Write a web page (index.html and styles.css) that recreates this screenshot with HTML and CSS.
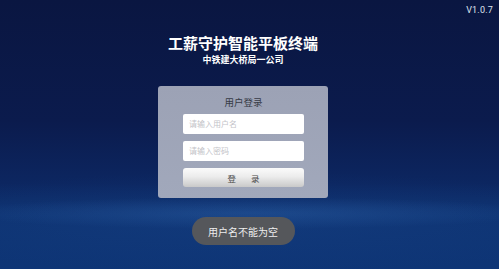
FILE: index.html
```html
<!DOCTYPE html>
<html lang="zh">
<head>
<meta charset="utf-8">
<link rel="stylesheet" href="styles.css">
</head>
<body>
<div class="screen">
  <div class="topbar"><span class="version">V1.0.7</span></div>
  <div class="main">
    <h1 class="title">工薪守护智能平板终端</h1>
    <div class="subtitle">中铁建大桥局一公司</div>
    <div class="card">
      <div class="card-title">用户登录</div>
      <div class="field"><span class="placeholder">请输入用户名</span></div>
      <div class="field"><span class="placeholder">请输入密码</span></div>
      <div class="btn">登<span class="gap"></span>录</div>
    </div>
    <div class="toast">用户名不能为空</div>
  </div>
</div>
</body>
</html>
```
FILE: styles.css
```css
html, body {
  margin: 0;
  padding: 0;
}
body {
  width: 499px;
  height: 269px;
  overflow: hidden;
  font-family: "Noto Sans CJK SC", "Noto Sans", sans-serif;
}
.screen {
  width: 499px;
  height: 269px;
  display: flex;
  flex-direction: column;
  background:
    radial-gradient(ellipse 300px 16px at 250px 213px, rgba(50,105,175,0.35), rgba(50,105,175,0) 100%),
    radial-gradient(ellipse 400px 50px at 250px 222px, rgba(25,70,140,0.3), rgba(25,70,140,0) 100%),
    linear-gradient(180deg, #0a1641 0%, #0b1b4d 45%, #0c2660 68%, #0e3372 80%, #0e3576 100%);
}
.topbar {
  display: flex;
  justify-content: flex-end;
  padding: 3px 6px 0 0;
  height: 14px;
}
.version {
  color: #dfe4ef;
  font-family: "Roboto", "Liberation Sans", sans-serif;
  font-size: 9px;
  line-height: 14px;
  letter-spacing: 0.2px;
}
.main {
  display: flex;
  flex-direction: column;
  align-items: center;
  padding-right: 13px;
}
.title {
  margin: 16px 0 0;
  color: #ffffff;
  font-size: 15px;
  font-weight: 700;
  line-height: 20px;
}
.subtitle {
  margin-top: 1px;
  color: #ffffff;
  font-size: 9px;
  font-weight: 700;
  line-height: 12px;
}
.card {
  margin-top: 20px;
  width: 170px;
  box-sizing: border-box;
  padding: 10px 24px 11px 25px;
  border-radius: 3px;
  background: linear-gradient(180deg, #9ca2b5 0%, #a1a8bb 100%);
  display: flex;
  flex-direction: column;
  gap: 7px;
}
.card-title {
  text-align: center;
  color: #363a45;
  font-size: 9.5px;
  line-height: 12px;
  margin-bottom: -1px;
}
.field {
  height: 20px;
  background: #ffffff;
  border-radius: 2px;
  display: flex;
  align-items: center;
  padding-left: 6px;
}
.placeholder {
  color: #c3c3c8;
  font-size: 8px;
  line-height: 12px;
}
.btn {
  height: 19px;
  border-radius: 3px;
  background: linear-gradient(180deg, #fbfbfb 0%, #ececec 45%, #c9c9c9 100%);
  color: #4a4a4a;
  font-size: 8.5px;
  display: flex;
  align-items: center;
  justify-content: center;
}
.gap {
  display: inline-block;
  width: 15px;
}
.toast {
  margin-top: 19px;
  width: 103px;
  height: 28px;
  border-radius: 14px;
  background: #55575b;
  color: #eeeeee;
  font-size: 10px;
  display: flex;
  align-items: center;
  justify-content: center;
}
```
